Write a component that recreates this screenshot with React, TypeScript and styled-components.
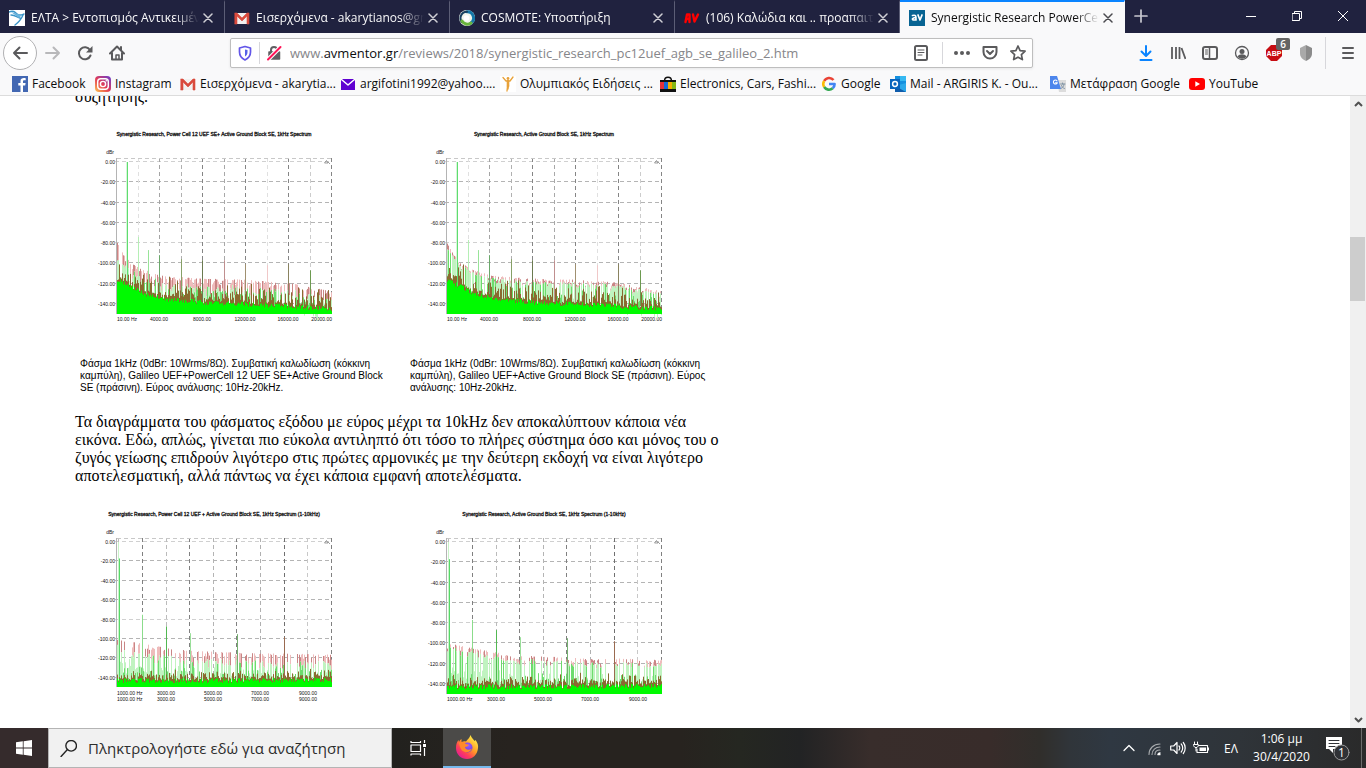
import React from "react";
import styled, { createGlobalStyle } from "styled-components";

const ui = `"Open Sans", "Noto Sans", sans-serif`;

const GlobalStyle = createGlobalStyle`
  * { box-sizing: border-box; }
  body { margin: 0; background: #fff; overflow: hidden; font-family: ${ui}; }
  button, input { font-family: inherit; }
`;

const Screen = styled.div`
  display: flex;
  flex-direction: column;
  height: 100vh;
`;

/* ---------- tab strip ---------- */

const TabStrip = styled.header`
  display: flex;
  height: 33px;
  flex: none;
  background: #20223f;
`;

const Tab = styled.div<{ $active?: boolean }>`
  display: flex;
  align-items: center;
  width: 225px;
  flex: 0 1 225px;
  min-width: 0;
  padding: 0 7px 0 9px;
  color: ${(p) => (p.$active ? "#0c0c0d" : "#f9f9fa")};
  background: ${(p) => (p.$active ? "#f9f9fa" : "transparent")};
  border-top: 2px solid ${(p) => (p.$active ? "#0a84ff" : "transparent")};
  border-right: 1px solid ${(p) => (p.$active ? "transparent" : "#5c5e76")};
`;

const TabTitle = styled.button`
  flex: 1;
  min-width: 0;
  margin-left: 6px;
  padding: 0;
  border: 0;
  background: none;
  color: inherit;
  font-size: 12px;
  line-height: 18px;
  text-align: left;
  white-space: nowrap;
  overflow: hidden;
  mask-image: linear-gradient(to left, transparent, #000 24px);
`;

const IconButton = styled.button<{ $width?: number; $color?: string }>`
  display: flex;
  align-items: center;
  justify-content: center;
  position: relative;
  flex: none;
  width: ${(p) => p.$width ?? 32}px;
  height: 32px;
  padding: 0;
  border: 0;
  background: none;
  color: ${(p) => p.$color ?? "#5a5a5c"};
`;

const Spacer = styled.div`
  flex: 1;
`;

/* ---------- navigation bar ---------- */

const NavBar = styled.nav`
  display: flex;
  align-items: center;
  flex: none;
  height: 40px;
  padding-left: 3px;
  background: #f9f9fa;
`;

const BackButton = styled(IconButton)`
  width: 34px;
  height: 34px;
  border: 1px solid #b1b1b3;
  border-radius: 50%;
  background: #fff;
`;

const UrlBar = styled.div`
  display: flex;
  align-items: center;
  flex: 0 1 803px;
  min-width: 0;
  height: 30px;
  margin-left: 97px;
  border: 1px solid #bebebe;
  border-radius: 2px;
  background: #fff;
  box-shadow: 0 1px 3px rgba(0, 0, 0, 0.08);
`;

const UrlField = styled.div`
  position: relative;
  flex: 1;
  min-width: 0;
  margin-left: 2px;
  color: #86868a;
  font-size: 13px;
  line-height: 20px;
  white-space: nowrap;
  overflow: hidden;
`;

const UrlInput = styled.input`
  position: absolute;
  inset: 0;
  width: 100%;
  border: 0;
  padding: 0;
  background: none;
  outline: none;
`;

const Host = styled.span`
  color: #0c0c0d;
`;

const Divider = styled.span<{ $height: number; $gap?: number }>`
  flex: none;
  width: 1px;
  height: ${(p) => p.$height}px;
  margin: 0 ${(p) => p.$gap ?? 0}px;
  background: #d7d7db;
`;

const Badge = styled.span`
  position: absolute;
  top: 1px;
  right: 0;
  width: 14px;
  height: 12px;
  border-radius: 2px;
  background: #646464;
  color: #fff;
  font-size: 10px;
  font-weight: 600;
  line-height: 12px;
  text-align: center;
`;

/* ---------- bookmarks ---------- */

const Bookmarks = styled.nav`
  display: flex;
  align-items: center;
  flex: none;
  gap: 12px;
  height: 23px;
  padding: 0 12px;
  background: #f9f9fa;
  border-bottom: 1px solid #dcdcdc;
  overflow: hidden;
`;

const Bookmark = styled.a<{ $width: number }>`
  display: flex;
  align-items: center;
  flex: none;
  gap: 4px;
  width: ${(p) => p.$width}px;
  color: #0c0c0d;
  font-size: 12px;
  line-height: 18px;
  text-decoration: none;
  white-space: nowrap;

  svg { flex: none; }
`;

/* ---------- page ---------- */

const Viewport = styled.div`
  display: flex;
  flex: 1;
  min-height: 0;
  background: #fff;
`;

const Article = styled.main`
  flex: 1;
  min-width: 0;
  padding-left: 75px;
  overflow: hidden;
  color: #000;
  font-family: "Liberation Serif", serif;
  font-size: 16px;
  line-height: 18px;
`;

const Paragraph = styled.p<{ $clipped?: boolean }>`
  max-width: 650px;
  margin: ${(p) => (p.$clipped ? "-8px 0 10px" : "19px 0 11px")};
`;

const Figures = styled.div`
  display: grid;
  grid-template-columns: 330px 330px;
`;

const Figure = styled.figure`
  margin: 0;
  padding: 0 5px;

  svg { display: block; }
`;

const Caption = styled.figcaption`
  max-width: 312px;
  margin-top: 6px;
  font-family: "Liberation Sans", Arial, sans-serif;
  font-size: 10px;
  line-height: 12px;
`;

const ScrollTrack = styled.div`
  display: flex;
  flex-direction: column;
  flex: none;
  width: 16px;
  background: #f0f0f0;
`;

const ScrollButton = styled.button`
  display: flex;
  align-items: center;
  justify-content: center;
  height: 17px;
  padding: 0;
  border: 0;
  background: none;
  color: #505050;
`;

const ScrollThumb = styled.div`
  height: 64px;
  margin: 0 1px 0 0;
  background: #cdcdcd;
`;

const ScrollGap = styled.div<{ $grow: number }>`
  flex: ${(p) => p.$grow} 1 0;
`;

/* ---------- taskbar ---------- */

const Taskbar = styled.footer`
  display: flex;
  align-items: stretch;
  flex: none;
  height: 40px;
  background: linear-gradient(90deg, #352b2c 0, #352b2c 48px, #22211e 392px, #27231f 510px, #27231f 680px, #252721 740px, #222324 800px, #382d2b 870px, #382c2a 990px, #302e2b 1040px, #30353a 1070px, #2f3842 1110px, #2f3439 1240px, #2a2a2a 100%);
  color: #fff;
`;

const TaskButton = styled.button<{ $width: number; $active?: boolean }>`
  display: flex;
  align-items: center;
  justify-content: center;
  flex: none;
  width: ${(p) => p.$width}px;
  padding: 0;
  border: 0;
  border-bottom: 2px solid ${(p) => (p.$active ? "#76b9ed" : "transparent")};
  border-top: ${(p) => (p.$active ? "0" : "2px solid transparent")};
  background: ${(p) => (p.$active ? "#4b4a48" : "none")};
  color: #fff;
  font-size: 12px;
`;

const SearchBox = styled.label`
  display: flex;
  align-items: center;
  gap: 11px;
  flex: 0 1 344px;
  min-width: 0;
  padding: 0 11px;
  border: 1px solid #b4b4b4;
  background: #f1f1f1;
`;

const SearchInput = styled.input`
  flex: 1;
  min-width: 0;
  padding: 0;
  border: 0;
  outline: none;
  background: none;
  font-size: 15px;
  line-height: 22px;

  &::placeholder { color: #2d2d2d; opacity: 1; }
`;

const Clock = styled.time`
  display: flex;
  flex-direction: column;
  justify-content: center;
  width: 71px;
  padding-right: 6px;
  font-size: 12px;
  line-height: 18px;
  text-align: center;
`;

const DesktopEdge = styled.span`
  width: 5px;
  margin-left: 5px;
  border-left: 1px solid #6b6b6b;
`;

/* ---------- spectrum charts ---------- */

type Curve = [number, number][];

interface Spectrum {
  title: string;
  titleX: number;
  bottom: number;
  step: number;
  grid: { x: number; shade: string }[];
  labels: { x: number; text: string; anchor: "start" | "middle" | "end" }[];
  labelRows: number[];
  peaks: [number, number, string][];
  top: Curve;
  body: Curve;
  floor: Curve;
  density: number;
  tips: number;
  red: number;
  seed: number;
}

function at(curve: Curve, x: number) {
  for (let i = 1; i < curve.length; i++) {
    const [x0, y0] = curve[i - 1];
    const [x1, y1] = curve[i];
    if (x <= x1) return y0 + ((y1 - y0) * (x - x0)) / (x1 - x0);
  }
  return curve[curve.length - 1][1];
}

function noise(seed: number) {
  let s = seed;
  return () => {
    s = (s * 1664525 + 1013904223) % 4294967296;
    return s / 4294967296;
  };
}

const LEFT = 37;
const RIGHT = 252;
const TOP = 42;
const ZERO = 46;

function SpectrumChart(c: Spectrum) {
  const rnd = noise(c.seed);
  const y = (db: number) => ZERO + (-db * c.step) / 20;
  const path = { pink: "", red: "", pale: "", mid: "", brown: "", green: "" };
  for (let x = LEFT; x < RIGHT; x++) {
    const px = x + 0.5;
    const tall = rnd() < c.density;
    const t = y(at(c.top, x)) + rnd() * rnd() * 8;
    const b = y(at(c.body, x)) + rnd() * 8;
    const f = y(at(c.floor, x)) + (rnd() - 0.5) * 5;
    const greenTop = t + (b - t) * c.red * (0.6 + rnd() * 0.6);
    if (tall) {
      path[rnd() < 0.35 ? "red" : "pink"] += `M${px} ${t.toFixed(1)}V${greenTop.toFixed(1)}`;
      path[rnd() < 0.22 ? "mid" : "pale"] += `M${px} ${greenTop.toFixed(1)}V${c.bottom}`;
    } else {
      path.pale += `M${px} ${(b + 4 + rnd() * 14).toFixed(1)}V${c.bottom}`;
    }
    path.brown += `M${px} ${(f - 1 - rnd() * rnd() * c.tips).toFixed(1)}V${c.bottom}`;
    if (rnd() < 0.35) path.mid += `M${px} ${(f - rnd() * 12).toFixed(1)}V${c.bottom}`;
    path.green += `M${px} ${f.toFixed(1)}V${c.bottom}`;
  }
  return (
    <svg width="320" height="236" viewBox="0 0 320 236" role="img" aria-label={c.title}>
      <g fontFamily="Liberation Sans, Arial, sans-serif" fontSize="5" fill="#111">
        <text x={c.titleX} y="20" stroke="#111" strokeWidth="0.3" textAnchor="middle">{c.title}</text>
        <text x="34" y="38" textAnchor="end">dBr</text>
        {[0, 1, 2, 3, 4, 5, 6, 7].map((n) => (
          <text key={n} x="35" y={y(-20 * n) + 2} textAnchor="end">{n ? `-${n * 20}.00` : "0.00"}</text>
        ))}
        {c.labelRows.map((ly) =>
          c.labels.map((l) => (
            <text key={`${ly}${l.text}`} x={l.x} y={ly} textAnchor={l.anchor}>{l.text}</text>
          ))
        )}
      </g>
      <g fill="none" strokeWidth="1">
        {[0, 1, 2, 3, 4, 5, 6, 7].map((n) => (
          <path key={n} d={`M${LEFT - 2} ${Math.round(y(-20 * n)) - 0.5}H${RIGHT}`} stroke={n % 4 === 0 ? "#d0d0d0" : "#b4b4b4"} strokeDasharray="4 3" />
        ))}
        {c.grid.map((g) => (
          <path key={g.x} d={`M${Math.floor(g.x) + 0.5} ${TOP}V${c.bottom}`} stroke={g.shade} strokeDasharray="4 3" />
        ))}
        <path d={`M${LEFT} ${TOP + 0.5}H${RIGHT}`} stroke="#c8c8c8" strokeDasharray="4 3" />
        <path d={`M${LEFT - 0.5} ${TOP}V${c.bottom}`} stroke="#b4b4b4" />
        <path d="M244.500 47L246.500 44.500L248 47ZM248 46L250 48" stroke="#777" strokeWidth="0.700" />
        <path d={path.pink} stroke="#eebcbc" />
        <path d={path.red} stroke="#c98585" />
        <path d={path.pale} stroke="#c0f3c0" />
        <path d={path.mid} stroke="#6cdc6c" />
        {c.peaks.map(([x, db, color]) => (
          <path key={`${x}${color}`} d={`M${x + 0.5} ${y(db)}V${c.bottom - 8}`} stroke={color} />
        ))}
        <path d={path.brown} stroke="#8a6a30" />
        <path d={path.green} stroke="#00fa00" />
      </g>
    </svg>
  );
}

const wideGrid = ["#e0e0e0", "#a4a4a4", "#b0b0b0", "#858585", "#a8a8a8", "#858585", "#e0e0e0", "#858585", "#ccc", "#858585"].map(
  (shade, i) => ({ x: 58.4 + i * 21.45, shade })
);
const narrowGrid = ["#bbb", "#808080", "#bbb", "#808080", "#b4b4b4", "#808080", "#b0b0b0", "#707070", "#c8c8c8", "#808080"].map(
  (shade, i) => ({ x: 38.7 + i * 23.65, shade })
);

const wideLabels: Spectrum["labels"] = [
  { x: 37, text: "10.00 Hz", anchor: "start" },
  { x: 79, text: "4000.00", anchor: "middle" },
  { x: 122, text: "8000.00", anchor: "middle" },
  { x: 165, text: "12000.00", anchor: "middle" },
  { x: 208, text: "16000.00", anchor: "middle" },
  { x: 252, text: "20000.00", anchor: "end" },
];
const narrowLabels: Spectrum["labels"] = [
  { x: 37, text: "1000.00 Hz", anchor: "start" },
  { x: 86, text: "3000.00", anchor: "middle" },
  { x: 133, text: "5000.00", anchor: "middle" },
  { x: 180, text: "7000.00", anchor: "middle" },
  { x: 228, text: "9000.00", anchor: "middle" },
];

const wideTop: Curve = [[37, -79], [43, -91], [50, -99], [60, -105], [80, -112], [120, -115], [160, -116], [200, -118], [230, -123], [252, -128]];
const wideBody: Curve = [[37, -98], [50, -108], [80, -121], [120, -125], [200, -127], [252, -136]];
const wideFloor: Curve = [[37, -117], [50, -123], [65, -131], [90, -136], [130, -139], [200, -142], [252, -145]];
const narrowTop: Curve = [[37, -100], [60, -104], [80, -108], [110, -112], [160, -114], [252, -116]];
const narrowBody: Curve = [[37, -109], [70, -118], [120, -124], [252, -126]];
const narrowFloor: Curve = [[37, -143], [150, -143], [252, -142]];

const widePeaks = (second: number): Spectrum["peaks"] => [
  [47, 0, "#5fdd6f"], [46, 0, "#d5f5d8"], [58, second, "#b5efb5"], [68, -87, "#98e498"], [79, -92, "#6aa86a"],
  [101, -96, "#87a067"], [122, -97, "#6b7a50"], [144, -97, "#c08f8f"], [165, -101, "#a09070"],
  [187, -102, "#f0c8c8"], [208, -101, "#8a8360"], [230, -107, "#6c9a50"],
];
const narrowPeaks = (second: number): Spectrum["peaks"] => [
  [38, 0, "#c8f2c8"], [39, -17, "#55d968"], [62, second, "#8bdc8b"], [86, -87, "#52b852"],
  [110, -94, "#9adf9a"], [157, -95, "#75b070"], [204, -98, "#9a6a50"],
];

const wide = { bottom: 198, step: 20.25, grid: wideGrid, labels: wideLabels, labelRows: [205], top: wideTop, body: wideBody, floor: wideFloor, density: 0.72, tips: 22 };
const narrow = { grid: narrowGrid, labels: narrowLabels, top: narrowTop, body: narrowBody, floor: narrowFloor, density: 0.5, tips: 12 };

/* ---------- icons ---------- */

const Svg = ({ size = 16, children, box = 16 }: { size?: number; box?: number; children: React.ReactNode }) => (
  <svg width={size} height={size} viewBox={`0 0 ${box} ${box}`} fill="none" stroke="currentColor" strokeWidth="2" strokeLinecap="round" strokeLinejoin="round" aria-hidden="true">
    {children}
  </svg>
);

const Close = () => (
  <Svg size={10} box={10}><path d="M1 1l8 8M9 1l-8 8" strokeWidth="1.5" /></Svg>
);
const Gmail = () => (
  <Svg><path d="M1 3h14v11H1z" fill="#f2f0ef" stroke="none" /><path d="M1 3h2l5 5 5-5h2v11h-2V6L8 11 3 6v8H1z" fill="#d94a3d" stroke="#d94a3d" strokeWidth=".6" /></Svg>
);
const Elta = () => (
  <Svg><path d="M0 0h16v16H0z" fill="#fff" stroke="none" /><path d="M0 2c4-2 6 0 8 2s4 1 7 0M2 5c4 0 6 2 9 3M14 5c-2 5-4 7-8 10" stroke="#3a94c8" strokeWidth="1.4" /><path d="M2 2l7 2 4 1-3 3z" fill="#69b3dc" stroke="none" /></Svg>
);
const Cosmote = () => (
  <Svg><circle cx="8" cy="8" r="8" fill="#f1f5ec" stroke="none" /><path d="M8 1.8A6.2 6.2 0 0 1 12 13" stroke="#1578a8" strokeWidth="3" /><path d="M8 1.8A6.2 6.2 0 0 0 3 12" stroke="#183f5f" strokeWidth="2" /><path d="M3 11a6.2 6.2 0 0 0 9 2" stroke="#69b43c" strokeWidth="3" /><circle cx="7.5" cy="8" r="2.8" fill="#fff" stroke="none" /></Svg>
);
const AvRed = () => (
  <Svg><path d="M1.500 12L3 4.500h2.500V12M2.500 9h3M9 4.500l1.500 7 3.500-7" stroke="#f00" strokeWidth="2.400" /></Svg>
);
const AvBlue = () => (
  <Svg><path d="M0 0h16v16H0z" fill="#086493" stroke="none" /><path d="M3.500 5.500C7 4.600 7 6 7 10H5C2.500 10 3 7.500 7 7.500M9 5l2 5 2-5" stroke="#fff" strokeWidth="1.700" /></Svg>
);
const Back = () => <Svg><path d="M15 8H2M7.500 2.500L2 8l5.500 5.500" /></Svg>;
const Forward = () => <Svg><path d="M1 8h13M8.500 2.500L14 8l-5.500 5.500" /></Svg>;
const Reload = () => (
  <Svg><path d="M13.500 10.500A6 6 0 1 1 13 5" /><path d="M15.500 1v6.500H9z" fill="currentColor" stroke="none" /></Svg>
);
const Home = () => (
  <Svg><path d="M1 8.500L8 1.500l7 7M3 8v6.500h10V8M12 2v3" /><path d="M7 14v-4h3v4" strokeWidth="1.500" /></Svg>
);
const Shield = () => (
  <Svg><path d="M8 1.500l5.500 1.500v4c0 4-2.500 6.500-5.500 8-3-1.500-5.500-4-5.500-8V3z" stroke="#6356e8" strokeWidth="1.700" /><path d="M8 4.500l2.500.6V7c0 2-1 3.500-2.500 4.500z" fill="#5560e8" stroke="none" /></Svg>
);
const Insecure = () => (
  <Svg><path d="M3 7h10.500v7H3z" fill="#5f5f62" stroke="#5f5f62" strokeWidth="1.500" /><path d="M5 7V5a3 3 0 0 1 6 0v2" stroke="#5f5f62" /><path d="M2 14.500L14.500 2" stroke="#fff" strokeWidth="4" /><path d="M2 14.500L14.500 2" stroke="#ff1457" /></Svg>
);
const Reader = () => (
  <Svg><rect x="2" y="1" width="12" height="14" rx="1.500" /><path d="M5 5h6M5 7.500h6M5 10h4" strokeWidth="1" /></Svg>
);
const Dots = () => (
  <Svg><g fill="currentColor" stroke="none"><circle cx="2" cy="8" r="2" /><circle cx="8" cy="8" r="2" /><circle cx="14" cy="8" r="2" /></g></Svg>
);
const Pocket = () => (
  <Svg><path d="M1.500 2h13v5a6.500 6.500 0 0 1-13 0zM5 6l3 3 3-3" /></Svg>
);
const Star = () => (
  <Svg><path d="M8 1l2.100 4.600 5 .6-3.700 3.400 1 5L8 12.200l-4.400 2.400 1-5L.9 6.200l5-.6z" strokeWidth="1.700" /></Svg>
);
const Download = () => <Svg><path d="M8 1v9M3.500 6.500L8 11l4.500-4.500M2.500 15h11" /></Svg>;
const Library = () => (
  <Svg><path d="M2 2v12M6 2v12M9.500 2v12M11.500 3l4 11" strokeWidth="1.800" strokeLinecap="butt" /></Svg>
);
const Sidebar = () => (
  <Svg><rect x="1" y="2" width="14" height="12" rx="2" /><path d="M7.500 2v12" strokeWidth="1.500" /><path d="M3.500 5h2M3.500 7h2M3.500 9h2" strokeWidth="1" /></Svg>
);
const Account = () => (
  <Svg><circle cx="8" cy="8" r="6.500" strokeWidth="1.300" /><circle cx="8" cy="6.500" r="2.500" fill="currentColor" stroke="none" /><path d="M3.500 11.500c2-3 7-3 9 0-2.500 3-6.500 3-9 0z" fill="currentColor" stroke="none" /></Svg>
);
const Adblock = () => (
  <Svg><path d="M5 0h6l5 5v6l-5 5H5l-5-5V5z" fill="#c70d12" stroke="none" /><text x="8" y="11" fontSize="7" fontWeight="700" fontFamily="Liberation Sans, sans-serif" textAnchor="middle" fill="#fff" stroke="none">ABP</text></Svg>
);
const GreyShield = () => (
  <Svg><path d="M8 0v16c-4-2-6-4-6-8V3z" fill="#a9a9a9" stroke="none" /><path d="M8 0v16c4-2 6-4 6-8V3z" fill="#8b8b8b" stroke="none" /></Svg>
);
const Menu = () => <Svg><path d="M3 3h10M3 8h10M3 13h10" /></Svg>;

const Facebook = () => (
  <Svg><path d="M0 0h16v16H0z" fill="#4267b2" stroke="none" /><path d="M11 16V9.500h2.200l.4-2.500H11V5.500c0-.8.300-1.200 1.300-1.200h1.400V2.200C11 1.700 8.500 2.200 8.500 5v2H6.300v2.500h2.200V16z" fill="#fff" stroke="none" /></Svg>
);
const Instagram = () => (
  <Svg>
    <defs><linearGradient id="insta" x1="0" y1="1" x2=".9" y2="0"><stop stopColor="#ffc44c" /><stop offset=".5" stopColor="#e23b57" /><stop offset="1" stopColor="#6e3dc8" /></linearGradient></defs>
    <rect width="16" height="16" rx="4" fill="url(#insta)" stroke="none" />
    <g stroke="#fff" strokeWidth="1.400"><rect x="2.700" y="2.700" width="10.600" height="10.600" rx="3" /><circle cx="8" cy="8" r="2.600" /></g><circle cx="11.300" cy="4.700" r=".8" fill="#fff" stroke="none" />
  </Svg>
);
const Yahoo = () => (
  <Svg><path d="M1 3h14v11H1z" fill="#5f01d1" stroke="none" /><path d="M1.500 3.500L8 9l6.500-5.500" stroke="#fff" strokeWidth="1.500" /></Svg>
);
const Runner = () => (
  <Svg><path d="M0 0h16v16H0z" fill="#fff" stroke="none" /><g stroke="#e8a23a"><path d="M3 1.500l3 3.500h4l3-4" strokeWidth="1.300" /><path d="M8 5v5" strokeWidth="2.600" /><path d="M7.500 10L7 15M8.500 10l-.5 3" strokeWidth="1.300" /></g><circle cx="8" cy="2.500" r="1.400" fill="#e8a23a" stroke="none" /></Svg>
);
const Ebay = () => (
  <Svg><path d="M4.500 5c0-5 7-5 7 0" stroke="#111" strokeWidth="1.400" /><g stroke="none"><path d="M0 4h16v12H0z" fill="#111" /><path d="M0 6h4v7H0z" fill="#e53238" /><path d="M4 6h4v7H4z" fill="#1669d6" /><path d="M8 6h4v7H8z" fill="#f5af02" /><path d="M12 6h4v7h-4z" fill="#86b817" /></g></Svg>
);
const Google = () => (
  <Svg><g strokeWidth="2.600" strokeLinecap="butt"><path d="M12.500 4A5.600 5.600 0 0 0 3.200 5" stroke="#ea4335" /><path d="M3.200 5a5.600 5.600 0 0 0 0 6" stroke="#fbbc05" /><path d="M3.200 11a5.600 5.600 0 0 0 8.500 1.300" stroke="#34a853" /><path d="M11.700 12.300A5.600 5.600 0 0 0 13.600 8H8" stroke="#4285f4" /></g></Svg>
);
const Outlook = () => (
  <Svg><g stroke="none"><path d="M5 0h11v15H5z" fill="#1490df" /><path d="M10 0h6v5h-6z" fill="#35b8f1" /><path d="M5 10l11-3v9H5z" fill="#2aa8ea" /><path d="M5 10l11 6H5z" fill="#0f5cab" /><path d="M0 3h10v10H0z" fill="#0a64bd" /></g><circle cx="5" cy="8" r="2.400" stroke="#fff" strokeWidth="1.500" /></Svg>
);
const Translate = () => (
  <Svg><path d="M7 4h9v12H9z" fill="#dcdcdc" stroke="none" /><path d="M0 0h7l4 13H0z" fill="#4d86ec" stroke="none" /><path d="M7 4.800a2 2 0 1 0 .3 2H5.500" stroke="#fff" strokeWidth="1.100" /><path d="M10.500 8H15M12.500 7v1M11 12.500c2-1 3-2.500 3-4.500M11.500 9.500c.5 1.500 1.500 2.500 3 3" stroke="#7b8ea0" strokeWidth=".9" /></Svg>
);
const YouTube = () => (
  <Svg><rect x="0" y="2" width="16" height="12" rx="3" fill="#f00" stroke="none" /><path d="M6.300 5.200L11 8l-4.700 2.800z" fill="#fff" stroke="none" /></Svg>
);

const Windows = () => (
  <Svg><g fill="#fff" stroke="none"><path d="M0 2.300l6.800-1v6.200H0zM7.600 1.200L16 0v7.500H7.600zM0 8.400h6.800v6.300L0 13.700zM7.600 8.400H16V16l-8.400-1.200z" /></g></Svg>
);
const TaskView = () => (
  <Svg><g strokeWidth="1.200" strokeLinecap="butt"><path d="M1 5h9.500v6.500H1zM1 1v1.500h9.500V1M1 15.500V14h9.500v1.500M14.500 0v3M14.500 8v8" /></g><path d="M13 4h3v3h-3z" fill="#fff" stroke="none" /></Svg>
);
const Firefox = () => (
  <Svg size={24} box={24}>
    <defs>
      <linearGradient id="fox" x1=".85" y1=".1" x2=".2" y2=".9"><stop stopColor="#fff04a" /><stop offset=".45" stopColor="#ff9a26" /><stop offset=".75" stopColor="#ff4057" /><stop offset="1" stopColor="#e7208d" /></linearGradient>
      <radialGradient id="globe" cx=".6" cy=".3" r=".8"><stop stopColor="#9a59ff" /><stop offset="1" stopColor="#5a3bd0" /></radialGradient>
    </defs>
    <g stroke="none">
      <path d="M15.500 0c1 3 3 4 4 6l1-1c2 3 3 5 2.500 8C22.500 19.500 18 24 12 24S1 19.500 1 13c0-4 1-6 2.500-8l.5 2C5 5 5.500 4.500 6.500 4v3c2-1 3-1 4.500-.5C13 4 14.500 3 15.500 0z" fill="url(#fox)" />
      <circle cx="12.500" cy="12.500" r="5" fill="url(#globe)" />
      <path d="M4 8c3-2 5-1 7 1 1 .5 2 .5 3 .8-1 1.700-2.500 2-4 2.200.5 3 4 3.500 7 1.500-1.500 4.500-8.500 5-11 .5C4.800 12 4.500 10 4 8z" fill="#ff8a2a" />
    </g>
  </Svg>
);
const Chevron = () => <Svg size={12} box={12}><path d="M1 8.500l5-5 5 5" strokeWidth="1.300" /></Svg>;
const Wifi = () => (
  <Svg><g strokeWidth="1.100" stroke="#a8abae"><path d="M3 14.500C3 8.500 7.500 4 14 4M6 14.500c0-4.500 3.500-7.500 8-7.500M9 14.500c0-3 2-4.500 5-4.500" /></g><path d="M14 15h-2.500a2.500 2.500 0 0 1 2.500-2.500z" fill="#fff" stroke="#fff" strokeWidth=".5" /></Svg>
);
const Volume = () => (
  <Svg><g strokeWidth="1.200"><path d="M.7 6h3L7 2.500v11L3.700 10h-3zM9 6c1 1 1 3 0 4M11.200 4c2 2 2 6 0 8M13.300 2.500c2.500 3 2.500 8 0 11" /></g></Svg>
);
const Battery = () => (
  <Svg><path d="M6 5.500h8.500v7H4V9" strokeWidth="1.100" /><path d="M6.500 7.500h6.500v3.500H6.500zM15 7.500h1v3h-1z" fill="#fff" stroke="none" /><path d="M1.500 2v2M4.500 2v2M.7 4.500h4.600V6L4 7.500H2L.7 6zM3 8v3" strokeWidth="1" /></Svg>
);
const Notifications = () => (
  <Svg size={26} box={26}><path d="M1 2h16v12H8v4l-4-4H1z" fill="#fff" stroke="none" /><path d="M4 5.500h10M4 8.500h10M4 11.500h6" stroke="#303338" strokeWidth="1" /><circle cx="16.500" cy="17.500" r="7.500" fill="#303236" stroke="#9a9a9a" strokeWidth="1" /><text x="16.500" y="22" fontSize="12" textAnchor="middle" fill="#fff" stroke="none">1</text></Svg>
);

/* ---------- page data ---------- */

const tabs = [
  { title: "ΕΛΤΑ > Εντοπισμός Αντικειμένων", icon: <Elta /> },
  { title: "Εισερχόμενα - akarytianos@gmail.com", icon: <Gmail /> },
  { title: "COSMOTE: Υποστήριξη", icon: <Cosmote /> },
  { title: "(106) Καλώδια και .. προαπαιτούμενα", icon: <AvRed /> },
  { title: "Synergistic Research PowerCell 12", icon: <AvBlue />, active: true },
];

const bookmarks = [
  { text: "Facebook", width: 71, icon: <Facebook /> },
  { text: "Instagram", width: 73, icon: <Instagram /> },
  { text: "Εισερχόμενα - akarytia...", width: 148, icon: <Gmail /> },
  { text: "argifotini1992@yahoo....", width: 148, icon: <Yahoo /> },
  { text: "Ολυμπιακός Ειδήσεις ...", width: 148, icon: <Runner /> },
  { text: "Electronics, Cars, Fashi...", width: 149, icon: <Ebay /> },
  { text: "Google", width: 57, icon: <Google /> },
  { text: "Mail - ARGIRIS K. - Ou...", width: 148, icon: <Outlook /> },
  { text: "Μετάφραση Google", width: 127, icon: <Translate /> },
  { text: "YouTube", width: 70, icon: <YouTube /> },
];

export default function App() {
  return (
    <Screen>
      <GlobalStyle />
      <TabStrip>
        {tabs.map((t) => (
          <Tab key={t.title} $active={t.active}>
            {t.icon}
            <TabTitle>{t.title}</TabTitle>
            <IconButton $width={18} $color={t.active ? "#4a4a4f" : "#d0d0d6"} aria-label="Close tab"><Close /></IconButton>
          </Tab>
        ))}
        <IconButton $color="#c8c8d0" aria-label="New tab"><Svg><path d="M8 2v12M2 8h12" strokeWidth="1.700" /></Svg></IconButton>
        <Spacer />
        <IconButton $width={46} $color="#fff" aria-label="Minimize"><Svg size={10} box={10}><path d="M0 5.500h10" strokeWidth="1" /></Svg></IconButton>
        <IconButton $width={46} $color="#fff" aria-label="Restore"><Svg size={10} box={10}><path d="M.5 2.500h7v7h-7zM2.500 2V.5h7v7H8" strokeWidth="1" /></Svg></IconButton>
        <IconButton $width={46} $color="#fff" aria-label="Close"><Svg size={10} box={10}><path d="M0 0l10 10M10 0L0 10" strokeWidth="1" /></Svg></IconButton>
      </TabStrip>

      <NavBar>
        <BackButton aria-label="Back"><Back /></BackButton>
        <IconButton $color="#b8b8ba" aria-label="Forward"><Forward /></IconButton>
        <IconButton aria-label="Reload"><Reload /></IconButton>
        <IconButton aria-label="Home"><Home /></IconButton>
        <UrlBar>
          <IconButton $width={28} aria-label="Tracking protection"><Shield /></IconButton>
          <Divider $height={22} />
          <IconButton $width={28} aria-label="Connection is not secure"><Insecure /></IconButton>
          <UrlField>
            www.<Host>avmentor.gr</Host>/reviews/2018/synergistic_research_pc12uef_agb_se_galileo_2.htm
            <UrlInput aria-label="Address" />
          </UrlField>
          <IconButton aria-label="Reader view"><Reader /></IconButton>
          <Divider $height={22} $gap={5} />
          <IconButton $width={28} aria-label="Page actions"><Dots /></IconButton>
          <IconButton $width={28} aria-label="Save to Pocket"><Pocket /></IconButton>
          <IconButton $width={28} aria-label="Bookmark this page"><Star /></IconButton>
        </UrlBar>
        <Spacer />
        <IconButton $color="#0a84ff" aria-label="Downloads"><Download /></IconButton>
        <IconButton aria-label="Library"><Library /></IconButton>
        <IconButton aria-label="Sidebars"><Sidebar /></IconButton>
        <IconButton aria-label="Account"><Account /></IconButton>
        <IconButton aria-label="Adblock Plus"><Adblock /><Badge>6</Badge></IconButton>
        <IconButton aria-label="Protection"><GreyShield /></IconButton>
        <Divider $height={32} $gap={3} />
        <IconButton $width={37} aria-label="Menu"><Menu /></IconButton>
      </NavBar>

      <Bookmarks>
        {bookmarks.map((b) => (
          <Bookmark key={b.text} href="#" $width={b.width}>{b.icon}{b.text}</Bookmark>
        ))}
      </Bookmarks>

      <Viewport>
        <Article>
          <Paragraph $clipped>συζήτησης.</Paragraph>
          <Figures>
            <Figure>
              <SpectrumChart {...wide} title="Synergistic Research, Power Cell 12 UEF SE+ Active Ground Block SE, 1kHz Spectrum" titleX={134} peaks={widePeaks(-74)} red={0.85} seed={11} />
              <Caption>Φάσμα 1kHz (0dBr: 10Wrms/8Ω). Συμβατική καλωδίωση (κόκκινη καμπύλη), Galileo UEF+PowerCell 12 UEF SE+Active Ground Block SE (πράσινη). Εύρος ανάλυσης: 10Hz-20kHz.</Caption>
            </Figure>
            <Figure>
              <SpectrumChart {...wide} title="Synergistic Research, Active Ground Block SE, 1kHz Spectrum" titleX={134} peaks={widePeaks(-77)} red={0.25} seed={23} />
              <Caption>Φάσμα 1kHz (0dBr: 10Wrms/8Ω). Συμβατική καλωδίωση (κόκκινη καμπύλη), Galileo UEF+Active Ground Block SE (πράσινη). Εύρος ανάλυσης: 10Hz-20kHz.</Caption>
            </Figure>
          </Figures>
          <Paragraph>
            Τα διαγράμματα του φάσματος εξόδου με εύρος μέχρι τα 10kHz δεν αποκαλύπτουν κάποια νέα εικόνα. Εδώ, απλώς, γίνεται πιο εύκολα αντιληπτό ότι τόσο το πλήρες σύστημα όσο και μόνος του ο ζυγός γείωσης επιδρούν λιγότερο στις πρώτες αρμονικές με την δεύτερη εκδοχή να είναι λιγότερο αποτελεσματική, αλλά πάντως να έχει κάποια εμφανή αποτελέσματα.
          </Paragraph>
          <Figures>
            <Figure>
              <SpectrumChart {...narrow} bottom={191} step={19.4} labelRows={[199, 205]} title="Synergistic Research, Power Cell 12 UEF + Active Ground Block SE, 1kHz Spectrum (1-10kHz)" titleX={134} peaks={narrowPeaks(-75)} red={0.8} seed={37} />
            </Figure>
            <Figure>
              <SpectrumChart {...narrow} bottom={198} step={20.25} labelRows={[205]} title="Synergistic Research, Active Ground Block SE, 1kHz Spectrum (1-10kHz)" titleX={134} peaks={narrowPeaks(-77)} red={0.35} seed={51} />
            </Figure>
          </Figures>
        </Article>
        <ScrollTrack>
          <ScrollButton aria-label="Scroll up"><Svg size={9} box={9}><path d="M1 6l3.500-3.500L8 6" strokeLinecap="butt" /></Svg></ScrollButton>
          <ScrollGap $grow={124} />
          <ScrollThumb />
          <ScrollGap $grow={410} />
          <ScrollButton aria-label="Scroll down"><Svg size={9} box={9}><path d="M1 3l3.500 3.500L8 3" strokeLinecap="butt" /></Svg></ScrollButton>
        </ScrollTrack>
      </Viewport>

      <Taskbar>
        <TaskButton $width={48} aria-label="Start"><Windows /></TaskButton>
        <SearchBox>
          <Svg size={17}><g stroke="#222"><circle cx="10.500" cy="5.500" r="5" strokeWidth="1.300" /><path d="M7 9l-6 6.500" strokeWidth="1.300" /></g></Svg>
          <SearchInput aria-label="Αναζήτηση" placeholder="Πληκτρολογήστε εδώ για αναζήτηση" />
        </SearchBox>
        <TaskButton $width={51} aria-label="Task view"><TaskView /></TaskButton>
        <TaskButton $width={48} $active aria-label="Firefox"><Firefox /></TaskButton>
        <Spacer />
        <TaskButton $width={26} aria-label="Hidden icons"><Chevron /></TaskButton>
        <TaskButton $width={24} aria-label="Network"><Wifi /></TaskButton>
        <TaskButton $width={23} aria-label="Volume"><Volume /></TaskButton>
        <TaskButton $width={24} aria-label="Battery"><Battery /></TaskButton>
        <TaskButton $width={36} aria-label="Language">ΕΛ</TaskButton>
        <Clock><span>1:06 μμ</span><span>30/4/2020</span></Clock>
        <TaskButton $width={36} aria-label="Notifications"><Notifications /></TaskButton>
        <DesktopEdge />
      </Taskbar>
    </Screen>
  );
}
